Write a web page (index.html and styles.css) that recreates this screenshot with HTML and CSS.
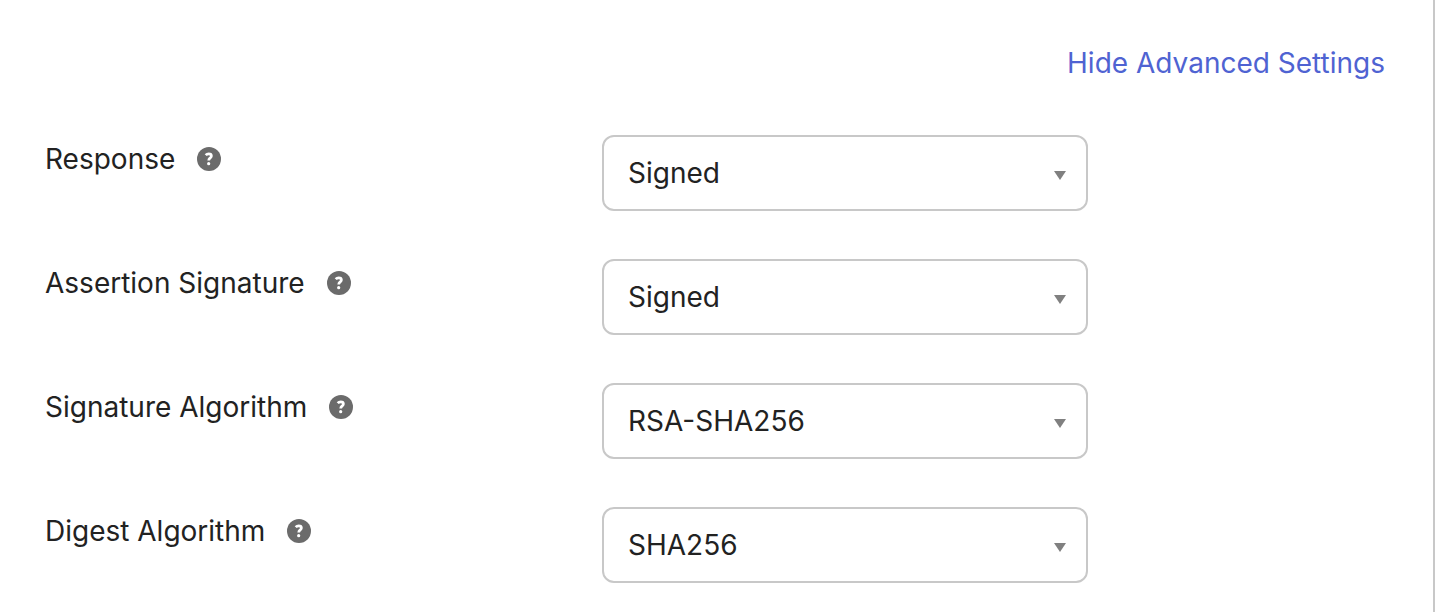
FILE: index.html
```html
<!DOCTYPE html>
<html lang="en">
<head>
<meta charset="utf-8">
<title>Advanced Settings</title>
<link rel="stylesheet" href="styles.css">
</head>
<body>
<svg class="defs" aria-hidden="true">
  <symbol id="help" viewBox="0 0 24 24">
    <circle cx="12" cy="12" r="12" fill="#6b6b6b"/>
    <path d="M8.700 8.100C9.500 7.200 10.500 6.800 11.700 6.800c1.700 0 2.700.8 2.700 2.100 0 2-2.700 2-2.700 4.700" fill="none" stroke="#fff" stroke-width="2.700"/>
    <circle cx="11.700" cy="16.700" r="1.600" fill="#fff"/>
  </symbol>
</svg>
<main class="panel">
  <div class="toolbar"><a class="toggle" href="#">Hide Advanced Settings</a></div>
  <form class="settings">
    <div class="row">
      <div class="caption"><label for="response">Response</label><button class="help" type="button" aria-label="Help"><svg><use href="#help"/></svg></button></div>
      <div class="field"><select id="response"><option>Signed</option></select></div>
    </div>
    <div class="row">
      <div class="caption"><label for="assertion">Assertion Signature</label><button class="help" type="button" aria-label="Help"><svg><use href="#help"/></svg></button></div>
      <div class="field"><select id="assertion"><option>Signed</option></select></div>
    </div>
    <div class="row">
      <div class="caption"><label for="signature">Signature Algorithm</label><button class="help" type="button" aria-label="Help"><svg><use href="#help"/></svg></button></div>
      <div class="field"><select id="signature"><option>RSA-SHA256</option></select></div>
    </div>
    <div class="row">
      <div class="caption"><label for="digest">Digest Algorithm</label><button class="help" type="button" aria-label="Help"><svg><use href="#help"/></svg></button></div>
      <div class="field"><select id="digest"><option>SHA256</option></select></div>
    </div>
  </form>
</main>
</body>
</html>
```
FILE: styles.css
```css
* { box-sizing: border-box; }
body {
  margin: 0;
  background: #fff;
  color: #222;
  font-family: Inter, "Liberation Sans", sans-serif;
  font-size: 28px;
  line-height: 36px;
}
.defs { display: none; }
.panel {
  min-height: 100vh;
  margin-right: 7px;
  padding: 45px 48px 29px 45px;
  border-right: 2px solid #c8c8c8;
}
.toolbar { display: flex; justify-content: flex-end; margin-bottom: 54px; }
.toggle { color: #4f63d2; text-decoration: none; }
.settings { display: grid; gap: 48px; }
.row { display: grid; grid-template-columns: 557px minmax(0, 486px); align-items: start; }
.caption { display: flex; align-items: center; gap: 22px; padding-top: 6px; }
.help { display: flex; padding: 0; border: 0; background: none; }
.help svg { width: 24px; height: 24px; }
.field { position: relative; }
.field::after {
  content: "";
  position: absolute;
  right: 22px;
  top: 36px;
  border: 6px solid transparent;
  border-top: 9px solid #808080;
  border-bottom: 0;
  pointer-events: none;
}
select {
  display: block;
  width: 100%;
  height: 76px;
  padding: 0 56px 0 24px;
  border: 2px solid #c8c8c8;
  border-radius: 12px;
  background: #fff;
  color: inherit;
  font: inherit;
  appearance: none;
}
```
